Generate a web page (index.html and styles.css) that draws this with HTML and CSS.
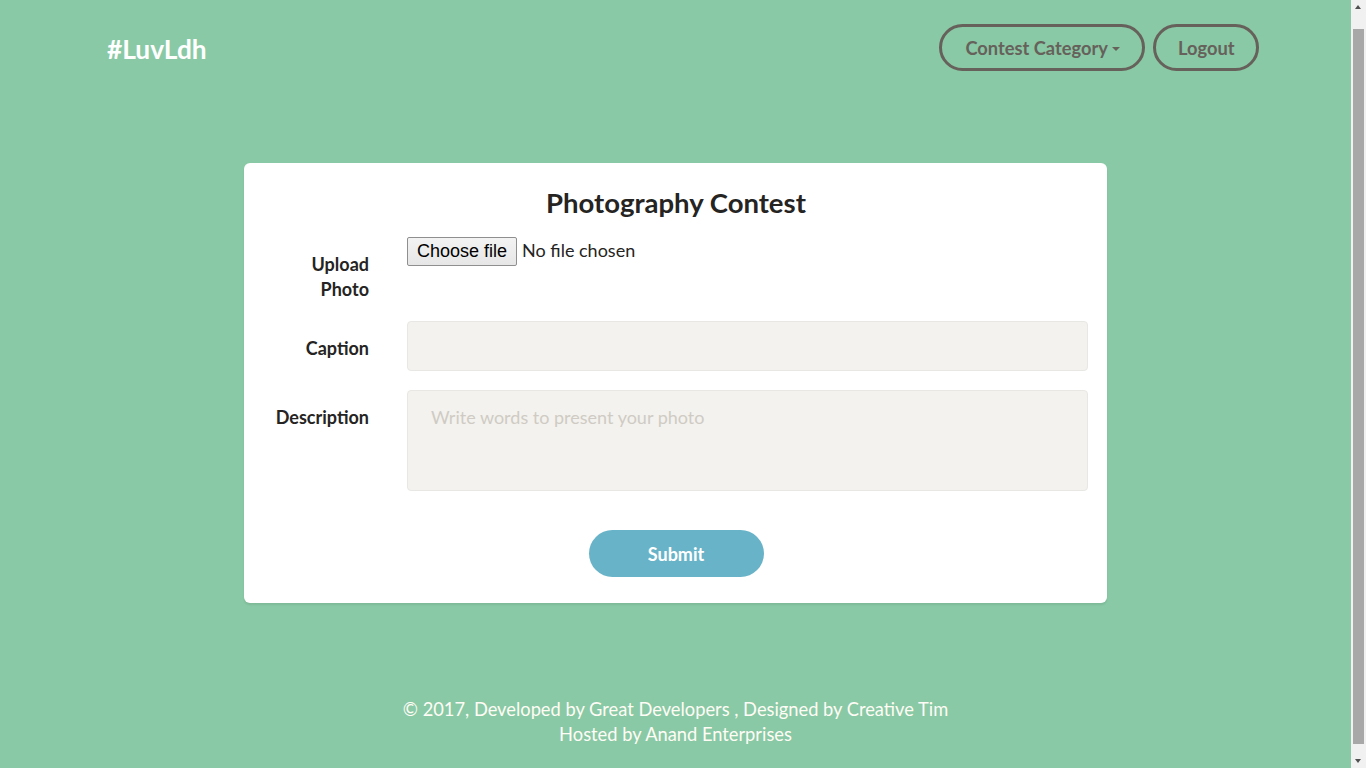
FILE: index.html
```html
<!DOCTYPE html>
<html lang="en">
<head>
<meta charset="utf-8">
<title>#LuvLdh - Photography Contest</title>
<link rel="stylesheet" href="styles.css">
</head>
<body>
<div class="page">
  <nav class="navbar">
    <div class="nav-inner">
      <a class="brand" href="#">#LuvLdh</a>
      <div class="nav-actions">
        <button class="btn-round btn-category" type="button">Contest Category <span class="caret"></span></button>
        <button class="btn-round btn-logout" type="button">Logout</button>
      </div>
    </div>
  </nav>

  <main class="main">
    <form class="card">
      <h2 class="card-title">Photography Contest</h2>
      <div class="form-row">
        <label class="control-label label-top" for="photo">Upload Photo</label>
        <div class="control file-control">
          <input id="photo" class="file-hidden" type="file">
          <label class="file-btn" for="photo">Choose file</label>
          <span class="file-name">No file chosen</span>
        </div>
      </div>
      <div class="form-row">
        <label class="control-label" for="caption">Caption</label>
        <div class="control"><input id="caption" class="form-control" type="text"></div>
      </div>
      <div class="form-row">
        <label class="control-label" for="desc">Description</label>
        <div class="control"><textarea id="desc" class="form-control textarea" placeholder="Write words to present your photo"></textarea></div>
      </div>
      <div class="actions">
        <button class="btn-submit" type="submit">Submit</button>
      </div>
    </form>
  </main>

  <footer class="footer">
    <div>© 2017, Developed by Great Developers , Designed by Creative Tim</div>
    <div>Hosted by Anand Enterprises</div>
  </footer>
</div>
<div class="scrollbar" aria-hidden="true">
  <span class="sb-arrow sb-up"></span>
  <span class="sb-thumb"></span>
  <span class="sb-arrow sb-down"></span>
</div>
</body>
</html>
```
FILE: styles.css
```css
html, body {
  margin: 0;
  padding: 0;
}
body {
  background: #89c9a5;
  font-family: "Lato", "Open Sans", sans-serif;
  color: #252422;
  font-size: 18px;
}
.page {
  width: calc(100% - 15px);
  min-height: 768px;
  display: flex;
  flex-direction: column;
}
.navbar {
  padding-top: 24px;
}
.nav-inner {
  width: 1170px;
  margin: 0 auto;
  box-sizing: border-box;
  padding: 0 1.5px 0 16.5px;
  display: flex;
  align-items: center;
  justify-content: space-between;
}
.brand {
  color: #ffffff;
  font-weight: 700;
  font-size: 26.3px;
  text-decoration: none;
  margin-top: 2px;
}
.nav-actions {
  display: flex;
  gap: 8px;
}
.btn-round {
  height: 47px;
  box-sizing: border-box;
  border: 3px solid #66615b;
  border-radius: 30px;
  background: transparent;
  color: #66615b;
  font-family: inherit;
  font-weight: 700;
  font-size: 18.3px;
  padding: 0 22px;
  display: inline-flex;
  align-items: center;
  gap: 4px;
}
.btn-category {
  padding: 0 22.5px 0 23px;
}
.btn-logout {
  padding: 0 21.5px;
}
.caret {
  display: inline-block;
  width: 0;
  height: 0;
  border-left: 4.5px solid transparent;
  border-right: 4.5px solid transparent;
  border-top: 4.5px solid #66615b;
  margin-top: 2px;
}
.main {
  padding-top: 92px;
  display: flex;
  justify-content: center;
}
.card {
  width: 863px;
  box-sizing: border-box;
  background: #ffffff;
  border-radius: 6px;
  box-shadow: 0 2px 2px rgba(0, 0, 0, 0.08);
  padding: 22px 19px 26px 20px;
}
.card-title {
  margin: 0 0 16px;
  text-align: center;
  font-size: 27.5px;
  font-weight: 700;
  color: #252422;
  line-height: 36px;
}
.form-row {
  display: grid;
  grid-template-columns: 105px 1fr;
  column-gap: 38px;
  margin-bottom: 19px;
}
.control-label {
  text-align: right;
  font-weight: 700;
  font-size: 18px;
  line-height: 25px;
  padding-top: 15px;
  color: #252422;
}
.control-label.label-top {
  padding-top: 15px;
  padding-left: 20px;
}
.file-control {
  display: flex;
  align-items: flex-start;
  gap: 5px;
}
.file-hidden {
  display: none;
}
.file-btn {
  display: inline-flex;
  align-items: center;
  height: 29px;
  box-sizing: border-box;
  padding: 0 9px;
  border: 1px solid #8f8f8f;
  border-radius: 2px;
  background: linear-gradient(#f3f3f3, #e6e6e6);
  font-family: "Liberation Sans", Arial, sans-serif;
  font-size: 18px;
  color: #000000;
}
.file-name {
  font-size: 18px;
  line-height: 26px;
  color: #252422;
}
.form-control {
  display: block;
  width: 100%;
  box-sizing: border-box;
  height: 50px;
  background: #f3f2ee;
  border: 1px solid #e8e7e3;
  border-radius: 4px;
  font-family: inherit;
  font-size: 18px;
  color: #66615b;
  padding: 8px 23px;
  outline: none;
}
.textarea {
  height: 101px;
  resize: none;
  padding: 14px 23px;
  line-height: 24px;
}
.textarea::placeholder {
  color: #cfcbc4;
}
.actions {
  display: flex;
  justify-content: center;
  padding-top: 20px;
}
.btn-submit {
  width: 175px;
  height: 47px;
  border: none;
  border-radius: 30px;
  background: #68b3c8;
  color: #ffffff;
  font-family: inherit;
  font-weight: 700;
  font-size: 18px;
}
.footer {
  margin-top: 94px;
  text-align: center;
  color: #fffcf5;
  font-size: 18.3px;
  line-height: 25px;
}
.scrollbar {
  position: fixed;
  top: 0;
  right: 0;
  width: 15px;
  height: 100%;
  background: #f1f1f1;
}
.sb-thumb {
  position: absolute;
  top: 29px;
  left: 2px;
  width: 11px;
  height: 715px;
  background: #a8a8a8;
}
.sb-arrow {
  position: absolute;
  left: 4px;
  width: 0;
  height: 0;
  border-left: 3.5px solid transparent;
  border-right: 3.5px solid transparent;
}
.sb-up {
  top: 5px;
  border-bottom: 4px solid #505050;
}
.sb-down {
  bottom: 5px;
  border-top: 4px solid #505050;
}
```
